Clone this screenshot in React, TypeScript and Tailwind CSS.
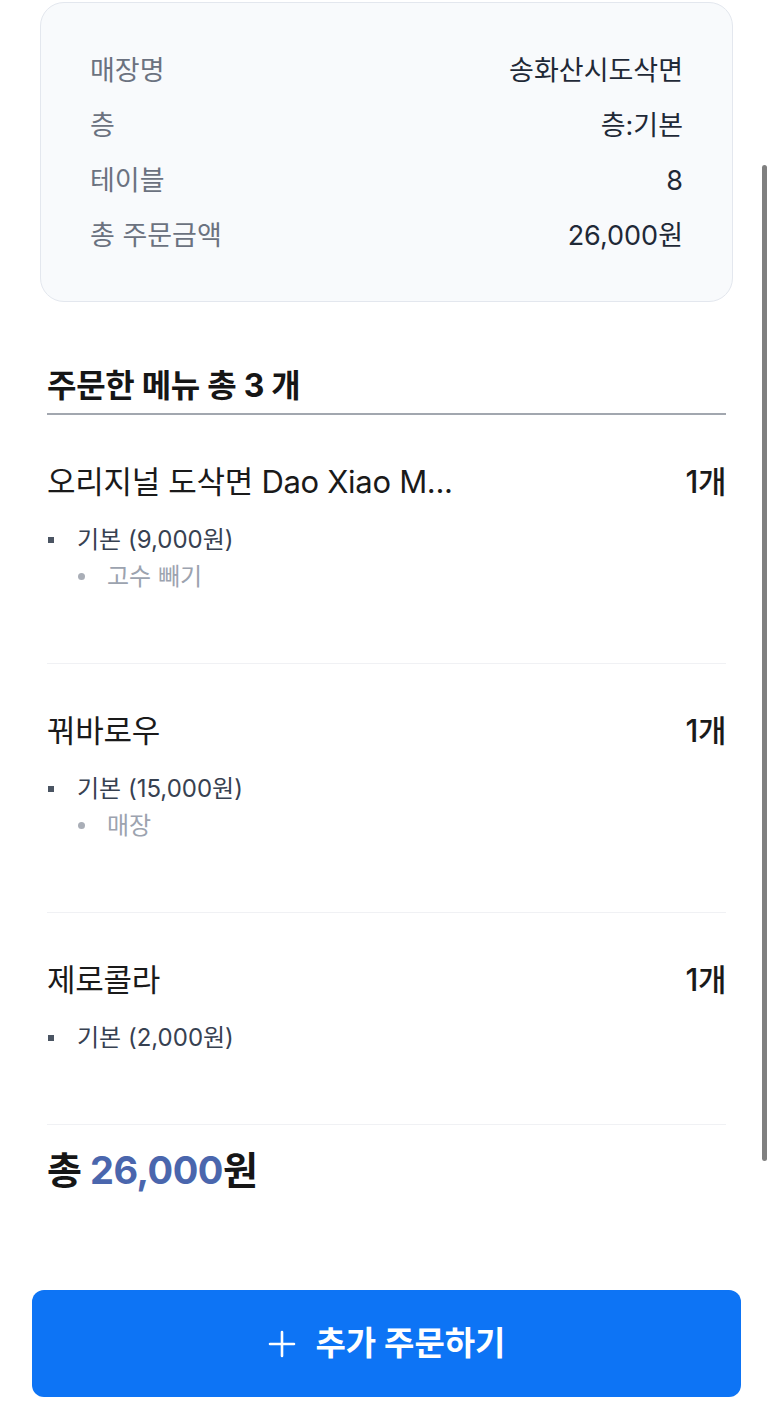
import React from "react";

type Opt = { label: string; subs: string[] };
type Item = { name: string; qty: string; opts: Opt[] };

const items: Item[] = [
  { name: "오리지널 도삭면 Dao Xiao M...", qty: "1개", opts: [{ label: "기본 (9,000원)", subs: ["고수 빼기"] }] },
  { name: "꿔바로우", qty: "1개", opts: [{ label: "기본 (15,000원)", subs: ["매장"] }] },
  { name: "제로콜라", qty: "1개", opts: [{ label: "기본 (2,000원)", subs: [] }] },
];

const info = [
  ["매장명", "송화산시도삭면"],
  ["층", "층:기본"],
  ["테이블", "8"],
  ["총 주문금액", "26,000원"],
];

export default function App() {
  return (
    <div
      className="relative w-[773px] h-[1413px] overflow-hidden bg-white"
      style={{ fontFamily: 'Inter, "Noto Sans CJK KR", "Noto Sans", sans-serif' }}
    >
      <div className="mt-[2px] mx-[40px] h-[300px] rounded-[24px] border border-[#e3e7ee] bg-[#f8fafc] px-[49px] pt-[41px] pb-[37px] flex flex-col">
        {info.map(([k, v]) => (
          <div key={k} className="h-[55px] flex items-center justify-between text-[27px]">
            <span className="text-[#6b7280]">{k}</span>
            <span className="text-[#1f2937]">{v}</span>
          </div>
        ))}
      </div>

      <div className="mx-[47px] w-[679px]">
        <div className="mt-[64px] h-[49px] border-b-2 border-[#a2a7af] flex items-start">
          <h2 className="text-[32px] leading-[40px] font-bold text-[#161616] tracking-[-0.3px]">
            주문한 메뉴 총 3 개
          </h2>
        </div>

        {items.map((it, i) => (
          <div key={i} className="border-b border-[#f0f1f4] pt-[47px] pb-[68px]">
            <div className="h-[40px] flex items-center justify-between">
              <span className="text-[31px] leading-[40px] text-[#1a1a1a] tracking-[-0.3px] whitespace-nowrap">
                {it.name}
              </span>
              <span className="text-[31px] leading-[40px] font-medium text-[#1a1a1a] tracking-[-0.5px]">{it.qty}</span>
            </div>
            <div className="mt-[19px]">
              {it.opts.map((o, j) => (
                <div key={j}>
                  <div className="h-[37px] flex items-center">
                    <span className="w-[6px] h-[6px] bg-[#4b5563] ml-[1px] mr-[23px]" />
                    <span className="text-[24px] text-[#374151]">{o.label}</span>
                  </div>
                  {o.subs.map((s, k) => (
                    <div key={k} className="h-[37px] flex items-center pl-[31px]">
                      <span className="w-[7px] h-[7px] rounded-full bg-[#a9aeb7] mr-[22px]" />
                      <span className="text-[24px] text-[#9ca3af]">{s}</span>
                    </div>
                  ))}
                </div>
              ))}
            </div>
          </div>
        ))}

        <div className="pt-[23px] h-[44px] box-content">
          <span className="text-[38px] leading-[44px] font-bold text-[#161616] tracking-[-0.5px]">
            총 <span className="text-[#4a66ad]">26,000</span>원
          </span>
        </div>
      </div>

      <div className="mt-[98px] mx-[32px] h-[107px] rounded-[12px] bg-[#0d74f5] flex items-center justify-center gap-[20px] text-white">
        <svg width="28" height="28" viewBox="0 0 28 28" fill="none" stroke="white" strokeWidth="2.6" strokeLinecap="round">
          <path d="M14 2v24M2 14h24" />
        </svg>
        <span className="text-[33px] font-bold">추가 주문하기</span>
      </div>

      <div className="absolute left-[762px] top-[165px] w-[5px] h-[996px] rounded-full bg-[#808080]" />
    </div>
  );
}
